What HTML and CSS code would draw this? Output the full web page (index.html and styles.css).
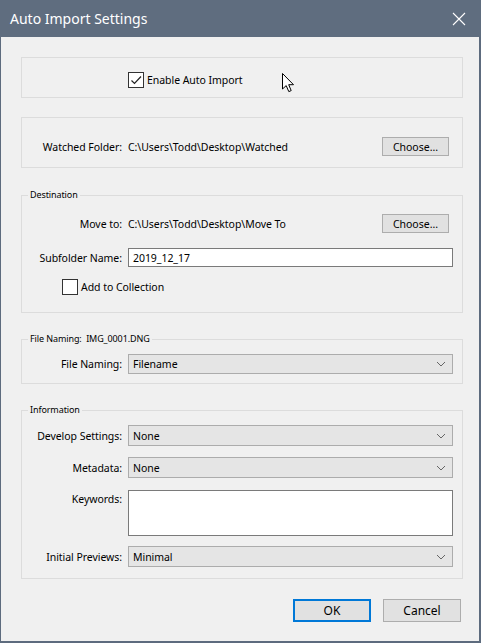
FILE: index.html
```html
<!DOCTYPE html>
<html lang="en">
<head>
<meta charset="utf-8">
<title>Auto Import Settings</title>
<link rel="stylesheet" href="styles.css">
</head>
<body>
<div class="window">
  <div class="titlebar">
    <span class="title">Auto Import Settings</span>
    <svg class="close" width="14" height="14" viewBox="0 0 14 14"><path d="M1 1 L13 13 M13 1 L1 13" stroke="#fff" stroke-width="1.1" fill="none"/></svg>
  </div>
  <div class="content">
    <div class="box box-enable">
      <label class="check">
        <span class="cb"><svg width="14" height="14" viewBox="0 0 14 14"><path d="M2.5 7.5 L5.5 10.5 L12 3.5" stroke="#222" stroke-width="1.2" fill="none"/></svg></span>
        <span>Enable Auto Import</span>
      </label>
    </div>

    <div class="box box-watched">
      <div class="row r-btn">
        <span class="lbl">Watched Folder:</span>
        <span class="val">C:\Users\Todd\Desktop\Watched</span>
        <button class="btn choose">Choose...</button>
      </div>
    </div>

    <fieldset class="group g-dest">
      <legend>Destination</legend>
      <div class="row r-btn">
        <span class="lbl">Move to:</span>
        <span class="val">C:\Users\Todd\Desktop\Move To</span>
        <button class="btn choose">Choose...</button>
      </div>
      <div class="row r-input">
        <span class="lbl">Subfolder Name:</span>
        <span class="input">2019_12_17</span>
      </div>
      <label class="check check-coll">
        <span class="cb"></span>
        <span>Add to Collection</span>
      </label>
    </fieldset>

    <fieldset class="group g-name">
      <legend>File Naming:&nbsp; IMG_0001.DNG</legend>
      <div class="row r-select">
        <span class="lbl">File Naming:</span>
        <span class="select">Filename<svg class="chev" width="10" height="6" viewBox="0 0 10 6"><path d="M1 1 L5 5 L9 1" stroke="#666" stroke-width="1" fill="none"/></svg></span>
      </div>
    </fieldset>

    <fieldset class="group g-info">
      <legend>Information</legend>
      <div class="row r-select">
        <span class="lbl">Develop Settings:</span>
        <span class="select">None<svg class="chev" width="10" height="6" viewBox="0 0 10 6"><path d="M1 1 L5 5 L9 1" stroke="#666" stroke-width="1" fill="none"/></svg></span>
      </div>
      <div class="row r-select r-meta">
        <span class="lbl">Metadata:</span>
        <span class="select">None<svg class="chev" width="10" height="6" viewBox="0 0 10 6"><path d="M1 1 L5 5 L9 1" stroke="#666" stroke-width="1" fill="none"/></svg></span>
      </div>
      <div class="row r-area">
        <span class="lbl">Keywords:</span>
        <span class="textarea"></span>
      </div>
      <div class="row r-select r-prev">
        <span class="lbl">Initial Previews:</span>
        <span class="select">Minimal<svg class="chev" width="10" height="6" viewBox="0 0 10 6"><path d="M1 1 L5 5 L9 1" stroke="#666" stroke-width="1" fill="none"/></svg></span>
      </div>
    </fieldset>

    <div class="actions">
      <button class="btn dlg ok">OK</button>
      <button class="btn dlg">Cancel</button>
    </div>
  </div>
  <svg class="cursor" width="13" height="20" viewBox="0 0 13 20"><path d="M0.5 0.5 V16 L4.2 12.6 L6.8 18.6 L9.2 17.6 L6.7 11.7 H11.5 Z" fill="#fff" stroke="#000" stroke-width="1" stroke-linejoin="miter"/></svg>
</div>
</body>
</html>
```

FILE: styles.css
```css
* { box-sizing: border-box; }
html, body { margin: 0; padding: 0; background: #f0f0f0; }
body { font-family: "Noto Sans", "Open Sans", sans-serif; font-size: 10.5px; letter-spacing: -0.05px; color: #000; }

.window {
  position: relative;
  width: 481px;
  height: 643px;
  background: #f0f0f0;
  border-left: 1px solid #5d6b7e;
  border-right: 2px solid #5d6b7e;
  border-bottom: 2px solid #5d6b7e;
  display: flex;
  flex-direction: column;
}

.titlebar {
  height: 37px;
  margin-left: -1px;
  margin-right: -2px;
  background: #5f6d7f;
  color: #fff;
  display: flex;
  align-items: center;
  justify-content: space-between;
  padding: 0 15px 0 10px;
}
.title { font-size: 14px; letter-spacing: 0; }
.close { display: block; }

.content { padding: 20px 16px 0 20px; display: flex; flex-direction: column; }

.box { border: 1px solid #dcdcdc; }
.box-enable { height: 41px; padding: 14px 0 0 106px; }
.box-watched { margin-top: 19px; padding: 19px 9px 11px 0; }

.check { display: flex; align-items: center; gap: 3px; height: 16px; }
.cb {
  width: 16px; height: 16px;
  border: 1px solid #333;
  background: #fff;
  display: flex; align-items: center; justify-content: center;
}

.group {
  margin: 19px 0 0 0;
  padding: 0 9px 0 0;
  border: 1px solid #dcdcdc;
  min-width: 0;
}
.group legend {
  font-size: 9px;
  line-height: 14px;
  padding: 0 2px;
  margin-left: 6px;
  letter-spacing: -0.1px;
}

.row {
  display: grid;
  grid-template-columns: 100px 1fr;
  column-gap: 6px;
  align-items: center;
}
.r-btn { grid-template-columns: 100px 1fr auto; height: 19px; }
.lbl { text-align: right; white-space: nowrap; }
.val { white-space: nowrap; }

.btn {
  font-family: inherit;
  font-size: 10.5px;
  color: #000;
  background: #e1e1e1;
  border: 1px solid #adadad;
  padding: 0;
  margin: 0;
}
.choose { width: 67px; height: 19px; margin-right: 4px; }

.g-dest { margin-top: 20px; padding-top: 12px; padding-bottom: 17px; }
.g-dest .r-input { margin-top: 15px; }
.input {
  height: 19px;
  background: #fff;
  border: 1px solid #7a7a7a;
  padding: 0 4px;
  display: flex; align-items: center;
}
.check-coll { margin-top: 12px; margin-left: 40px; }

.select {
  height: 21px;
  background: #e5e5e5;
  border: 1px solid #acacac;
  padding: 0 4px;
  display: flex; align-items: center; justify-content: space-between;
}
.chev { margin-right: 2px; }

.g-name { padding-top: 8px; padding-bottom: 9px; }
.g-name .select { height: 20px; }
.g-info { padding-top: 8px; padding-bottom: 11px; }
.g-info .r-meta { margin-top: 11px; }
.g-info .r-area { margin-top: 12px; }
.g-info .r-prev { margin-top: 10px; }

.r-area { align-items: start; }
.r-area .lbl { padding-top: 2px; }
.textarea {
  height: 46px;
  background: #fff;
  border: 1px solid #7a7a7a;
}

.actions {
  margin-top: 20px;
  display: flex;
  justify-content: flex-end;
  gap: 12px;
  padding-right: 2px;
}
.dlg { width: 78px; height: 23px; font-size: 12px; }
.ok { border: 2px solid #0078d7; }

.cursor { position: absolute; left: 281px; top: 73px; }
```
